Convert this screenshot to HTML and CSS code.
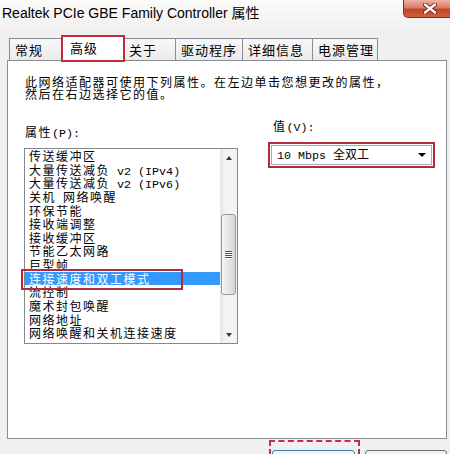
FILE: index.html
```html
<!DOCTYPE html>
<html lang="zh-CN">
<head>
<meta charset="utf-8">
<title>Realtek PCIe GBE Family Controller 属性</title>
<link rel="stylesheet" href="styles.css">
</head>
<body>
<div class="window">
  <div class="titlebar">
    <span class="title">Realtek PCIe GBE Family Controller 属性</span>
    <div class="close">
      <svg width="14" height="11" viewBox="0 0 14 11">
        <path d="M2 1.5 L12 9.5 M12 1.5 L2 9.5" stroke="#6e1f14" stroke-width="4.2" stroke-linecap="round"/>
        <path d="M2 1.5 L12 9.5 M12 1.5 L2 9.5" stroke="#ffffff" stroke-width="2.4" stroke-linecap="round"/>
      </svg>
    </div>
  </div>
  <div class="client">
    <div class="tabs">
      <div class="tab w1">常规</div>
      <div class="tab active w2">高级</div>
      <div class="tab w3">关于</div>
      <div class="tab w4">驱动程序</div>
      <div class="tab w5">详细信息</div>
      <div class="tab w6">电源管理</div>
    </div>
    <div class="panel">
      <p class="desc">此网络适配器可使用下列属性。在左边单击您想更改的属性，<br>然后在右边选择它的值。</p>
      <div class="props">
        <div class="col-left">
          <div class="label">属性<span class="m">(P):</span></div>
          <div class="listbox">
            <ul class="items">
              <li>传送缓冲区</li>
              <li>大量传送减负<span class="m"> v2 (IPv4)</span></li>
              <li>大量传送减负<span class="m"> v2 (IPv6)</span></li>
              <li>关机<span class="m"> </span>网络唤醒</li>
              <li>环保节能</li>
              <li>接收端调整</li>
              <li>接收缓冲区</li>
              <li>节能乙太网路</li>
              <li>巨型帧</li>
              <li class="sel">连接速度和双工模式</li>
              <li>流控制</li>
              <li>魔术封包唤醒</li>
              <li>网络地址</li>
              <li>网络唤醒和关机连接速度</li>
            </ul>
            <div class="scrollbar">
              <div class="sb-btn up"></div>
              <div class="track">
                <div class="thumb"><i></i><i></i><i></i><i></i></div>
              </div>
              <div class="sb-btn down"></div>
            </div>
          </div>
        </div>
        <div class="col-right">
          <div class="label">值<span class="m">(V):</span></div>
          <div class="select">
            <span class="val"><span class="m">10 Mbps </span>全双工</span>
            <span class="arrow"></span>
          </div>
        </div>
      </div>
    </div>
    <div class="buttons">
      <div class="focusbox"><div class="btn ok"></div></div>
      <div class="btn cancel"></div>
    </div>
  </div>
</div>
</body>
</html>
```
FILE: styles.css
```css
* { box-sizing: border-box; margin: 0; padding: 0; }
html, body { width: 450px; height: 454px; overflow: hidden; }
body {
  background: #f0f0f0;
  font-family: "Noto Sans CJK SC", sans-serif;
  color: #000;
}
.window { width: 450px; height: 454px; overflow: hidden; }

.titlebar {
  height: 28px;
  display: flex;
  align-items: flex-start;
  background: linear-gradient(#fbfbfa, #f2f1ef);
}
.title {
  font-family: "Liberation Sans", "Noto Sans CJK SC", sans-serif;
  font-size: 14px;
  line-height: 16px;
  padding: 5px 0 0 2px;
  white-space: nowrap;
}
.close {
  margin-left: auto;
  margin-right: -7px;
  width: 54px;
  height: 18px;
  border: 1px solid #8a2a1e;
  border-top: none;
  border-radius: 0 0 5px 5px;
  background: linear-gradient(#eeb3a3, #da7d66 45%, #c4432c 55%, #d0603f);
  display: flex;
  align-items: center;
  justify-content: center;
}

.client { padding: 8px 3px 0 7px; }

.tabs {
  display: flex;
  align-items: flex-end;
  height: 24px;
  padding-left: 2px;
  position: relative;
  z-index: 1;
}
.tab {
  height: 22px;
  border: 1px solid #898c95;
  border-bottom: none;
  margin-right: -1px;
  background: linear-gradient(#f8f8f8, #ebebeb);
  font-size: 13px;
  letter-spacing: 1px;
  line-height: 20px;
  padding: 1px 0 0 5px;
  white-space: nowrap;
}
.w1 { width: 54px; }
.w2 { width: 62px; }
.w3 { width: 53px; }
.w4 { width: 68px; }
.w5 { width: 71px; }
.w6 { width: 66px; }
.tab.active {
  height: 25px;
  margin-bottom: -1px;
  background: #fff;
  padding: 0 0 0 7px;
  line-height: 22px;
  position: relative;
  z-index: 2;
  outline: 2px solid #be2c38;
  outline-offset: -1px;
}

.panel {
  background: #fff;
  border: 1px solid #898c95;
  height: 379px;
  padding: 15px 0 0 16px;
}
.desc {
  font-size: 12px;
  letter-spacing: 1.5px;
  line-height: 12px;
  padding-left: 1px;
  white-space: nowrap;
}
.m {
  font-family: "Liberation Mono", monospace;
  font-size: 11.7px;
  letter-spacing: 0;
}

.props {
  display: grid;
  grid-template-columns: 214px 161px;
  column-gap: 33px;
  margin-top: 19px;
  align-items: start;
}
.col-left { padding-top: 6px; }
.label {
  font-size: 12px;
  letter-spacing: 1.5px;
  line-height: 14px;
  white-space: nowrap;
}
.col-left .label { padding-left: 1px; margin-bottom: 7px; }
.col-right .label { padding-left: 2px; margin-bottom: 10px; }

.listbox {
  display: flex;
  height: 196px;
  border: 1px solid #828790;
  background: #fff;
}
.items { flex: 1; list-style: none; }
.items li {
  height: 13.65px;
  line-height: 13.65px;
  font-size: 12px;
  letter-spacing: 1.5px;
  padding-left: 4px;
  white-space: nowrap;
}
.items li.sel {
  background: #3399ff;
  color: #fff;
  position: relative;
}
.items li.sel::after {
  content: "";
  position: absolute;
  left: -4px;
  top: -3px;
  width: 158px;
  height: 17px;
  border: 2px solid #b42a3a;
}

.scrollbar {
  width: 17px;
  display: flex;
  flex-direction: column;
  background: linear-gradient(90deg, #e6e6e6, #f4f4f4 35%, #f4f4f4);
}
.sb-btn {
  height: 17px;
  display: flex;
  align-items: center;
  justify-content: center;
}
.up::before {
  content: "";
  border-left: 3.5px solid transparent;
  border-right: 3.5px solid transparent;
  border-bottom: 4px solid #3a3a3a;
}
.down::before {
  content: "";
  border-left: 3.5px solid transparent;
  border-right: 3.5px solid transparent;
  border-top: 4px solid #3a3a3a;
}
.track { flex: 1; }
.thumb {
  margin: 48px 1px 0;
  height: 81px;
  border: 1px solid #999;
  border-radius: 3px;
  background: linear-gradient(90deg, #f5f5f5, #e6e6e6 50%, #d6d6d6);
  display: flex;
  flex-direction: column;
  align-items: center;
  justify-content: center;
  gap: 1px;
}
.thumb i {
  display: block;
  width: 7px;
  height: 1px;
  background: #555;
  box-shadow: 0 1px 0 #fff;
}

.select {
  height: 20px;
  border: 1px solid #a5acb5;
  background: #fff;
  display: flex;
  align-items: center;
  padding-left: 5px;
  outline: 2px solid #b42a3a;
  outline-offset: 1px;
}
.val {
  font-size: 12px;
  line-height: 18px;
  white-space: nowrap;
}
.arrow {
  margin-left: auto;
  margin-right: 5px;
  border-left: 4px solid transparent;
  border-right: 4px solid transparent;
  border-top: 4px solid #000;
}

.buttons {
  display: flex;
  justify-content: flex-end;
  align-items: flex-start;
  padding-top: 1px;
}
.focusbox {
  width: 91px;
  border: 2px dashed #c0303a;
  border-bottom: none;
  padding: 8px 3px 0 1px;
}
.btn {
  height: 23px;
  border-radius: 3px;
}
.ok {
  width: 83px;
  border: 1px solid #3c7fb1;
  background: linear-gradient(#eaf6fd, #bee6fd);
}
.cancel {
  width: 82px;
  margin-left: 5px;
  margin-top: 10px;
  border: 1px solid #707070;
  background: linear-gradient(#f2f2f2, #ebebeb 50%, #dddddd 50%, #cfcfcf);
}
```
